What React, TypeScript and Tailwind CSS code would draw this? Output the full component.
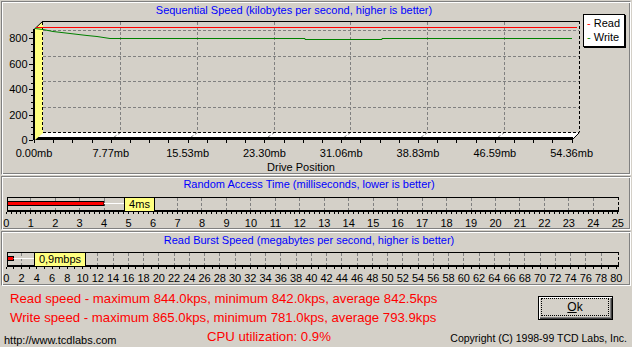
import React from "react";

// ─── Disk benchmark results window ────────────────────────────────────────────

const BG = "#d4d0c8";

const panel =
  "shrink-0 border border-t-[#808080] border-l-[#808080] border-b-white border-r-white shadow-[inset_1px_1px_0_#fff,inset_-1px_-1px_0_#808080]";

function SequentialChart() {
  const front = Array.from({ length: 8 }, (_, k) => 34 + k * 76.8);
  const labels = ["0.00mb", "7.77mb", "15.53mb", "23.30mb", "31.06mb", "38.83mb", "46.59mb", "54.36mb"];
  const backX = [120, 197, 274, 350, 427, 504];
  const backY = [30, 56, 81, 107];
  const xTicks = Array.from({ length: 29 }, (_, j) => Math.round(34 + j * 19.2) + 0.5);
  const yTicks = Array.from({ length: 18 }, (_, k) => ({ y: Math.round(140 - k * 6.375) + 0.5, major: k % 4 === 0 }));

  return (
    <svg width={626} height={157} viewBox="2 17 626 157" className="block">
      {/* back wall grid */}
      {backY.map((y) => (
        <line key={y} x1={43} x2={579} y1={y + 0.5} y2={y + 0.5} stroke="#808080" strokeDasharray="3 2" />
      ))}
      {backX.map((x) => (
        <line key={x} x1={x + 0.5} x2={x + 0.5} y1={22} y2={132} stroke="#808080" strokeDasharray="3 2" />
      ))}

      {/* floor */}
      <polygon points="43,132.5 579,132.5 572,139.5 36,139.5" fill="#fff" />
      {backX.map((x, i) => (
        <line key={x} x1={x + 0.5} y1={132.5} x2={front[i + 1]} y2={139.5} stroke="#808080" strokeDasharray="3 2" />
      ))}
      <line x1={43} x2={579} y1={132.5} y2={132.5} stroke="#000" strokeDasharray="3 2" />
      <line x1={579.5} x2={579.5} y1={21} y2={132} stroke="#000" strokeDasharray="3 2" />
      <line x1={579.5} y1={132.5} x2={572.5} y2={139.5} stroke="#000" />
      <rect x={35} y={137} width={538} height={3} fill="#000" />

      {/* left wall */}
      <polygon points="35,29 43,21 43,133 35,140" fill="#ffff80" />
      <line x1={42.5} x2={42.5} y1={22} y2={132} stroke="#000" strokeDasharray="3 2" />
      <rect x={33} y={29} width={2} height={111} fill="#000" />
      <line x1={34} y1={29.5} x2={43} y2={21} stroke="#000" />
      <line x1={43} x2={580} y1={21.5} y2={21.5} stroke="#000" />

      {/* series */}
      <line x1={36} x2={577} y1={27.5} y2={27.5} stroke="#ff0000" />
      <path
        d="M35 28.5 L43 29.5 L53 31.5 L70 33.5 L87 35.5 L97 36.5 L110 38.5 H305 V39.5 H382 V38.5 H572"
        fill="none"
        stroke="#008000"
      />

      {/* axes */}
      {yTicks.map((t) => (
        <line key={t.y} x1={t.major ? 29 : 31} x2={33} y1={t.y} y2={t.y} stroke="#000" />
      ))}
      {xTicks.map((x) => (
        <line key={x} x1={x} x2={x} y1={140} y2={143} stroke="#000" />
      ))}
      {["0", "200", "400", "600", "800"].map((l, k) => (
        <text key={l} x={27.5} y={144 - k * 25.5} fontSize={11} textAnchor="end" fill="#000">
          {l}
        </text>
      ))}
      {labels.map((l, k) => (
        <text key={l} x={front[k]} y={157} fontSize={11} textAnchor="middle" fill="#000">
          {l}
        </text>
      ))}
      <text x={301} y={171} fontSize={11} textAnchor="middle" fill="#000">
        Drive Position
      </text>
    </svg>
  );
}

type BarProps = {
  svgTop: number;
  top: number;
  labels: number[];
  span: number;
  ticksPer: number;
  fillRight: number;
  boxLeft: number;
  boxRight: number;
  value: string;
};

function ScaleBar({ svgTop, top, labels, span, ticksPer, fillRight, boxLeft, boxRight, value }: BarProps) {
  const n = labels.length - 1;
  const x = (i: number) => 6.3 + (i / n) * span;
  const ticks = Array.from({ length: n * ticksPer + 1 }, (_, j) => Math.floor(6.3 + (j / (n * ticksPer)) * span) + 0.5);

  return (
    <svg width={626} height={38} viewBox={`2 ${svgTop} 626 38`} className="block">
      {labels.slice(1, -1).map((_, i) => (
        <line
          key={i}
          x1={Math.floor(x(i + 1)) + 0.5}
          x2={Math.floor(x(i + 1)) + 0.5}
          y1={top + 1}
          y2={top + 13}
          stroke="#808080"
          strokeDasharray="3 2"
        />
      ))}
      <line x1={7} x2={619} y1={top + 0.5} y2={top + 0.5} stroke="#000" />
      <line x1={7.5} x2={7.5} y1={top} y2={top + 15} stroke="#000" />
      <line x1={618.5} x2={618.5} y1={top} y2={top + 13} stroke="#000" strokeDasharray="3 2" />
      <rect x={7} y={top + 13} width={612} height={2} fill="#000" />
      {ticks.map((t) => (
        <line key={t} x1={t} x2={t} y1={top + 15} y2={top + 17} stroke="#000" />
      ))}

      <rect x={7.5} y={top + 4.5} width={fillRight - 7.5} height={4} fill="#ff0000" stroke="#000" />
      <line x1={fillRight} x2={boxLeft} y1={top + 6.5} y2={top + 6.5} stroke="#fff" />
      <rect x={boxLeft + 0.5} y={top + 0.5} width={boxRight - boxLeft} height={14} fill="#ffff80" stroke="#000" />
      <text x={(boxLeft + boxRight) / 2 + 0.5} y={top + 11} fontSize={11} textAnchor="middle" fill="#000">
        {value}
      </text>

      {labels.map((l, i) => (
        <text key={l} x={x(i)} y={top + 30} fontSize={11} textAnchor="middle" fill="#000">
          {l}
        </text>
      ))}
    </svg>
  );
}

export default function App() {
  const accessLabels = Array.from({ length: 26 }, (_, i) => i);
  const burstLabels = Array.from({ length: 41 }, (_, i) => i * 2);

  return (
    <div
      className="w-[632px] h-[347px] overflow-hidden p-px flex flex-col gap-px font-['Liberation_Sans',Arial,sans-serif] text-black"
      style={{ background: BG }}
    >
      {/* Sequential speed */}
      <div className={`relative h-[174px] ${panel}`}>
        <div className="pt-px pr-[44px] text-center text-[11px] leading-[14px] text-[#0000ff]">
          Sequential Speed (kilobytes per second, higher is better)
        </div>
        <SequentialChart />
        <div className="absolute left-[581px] top-[12px] w-[42px] h-[33px] bg-white border border-black shadow-[1px_1px_0_#000] pt-px pl-[3px] text-[11px] leading-[14px]">
          <div>
            <span className="text-[#ff0000]">-</span> Read
          </div>
          <div>
            <span className="text-[#008000]">-</span> Write
          </div>
        </div>
      </div>

      {/* Random access */}
      <div className={`h-[54px] ${panel}`}>
        <div className="pr-[14px] text-center text-[11px] leading-[14px] text-[#0000ff]">
          Random Access Time (milliseconds, lower is better)
        </div>
        <ScaleBar
          svgTop={191}
          top={197}
          labels={accessLabels}
          span={611.5}
          ticksPer={5}
          fillRight={104}
          boxLeft={124}
          boxRight={154}
          value="4ms"
        />
      </div>

      {/* Burst speed */}
      <div className={`h-[55px] ${panel}`}>
        <div className="pt-px pr-[14px] text-center text-[11px] leading-[14px] text-[#0000ff]">
          Read Burst Speed (megabytes per second, higher is better)
        </div>
        <ScaleBar
          svgTop={247}
          top={252}
          labels={burstLabels}
          span={610}
          ticksPer={2}
          fillRight={13.5}
          boxLeft={34}
          boxRight={85}
          value="0,9mbps"
        />
      </div>

      {/* Summary */}
      <div className="flex flex-1">
        <div className="w-[440px] pt-[2px] text-[13.2px] leading-[19px] text-[#ff0000]">
          <div className="pl-[9px]">Read speed - maximum 844.0kps, minimum 842.0kps, average 842.5kps</div>
          <div className="pl-[9px]">Write speed - maximum 865.0kps, minimum 781.0kps, average 793.9kps</div>
          <div className="flex">
            <span className="w-[206px] shrink-0 pl-[3px] mt-[6px] text-[11px] leading-[14px] text-black">
              http://www.tcdlabs.com
            </span>
            <span>CPU utilization: 0.9%</span>
          </div>
        </div>
        <div className="flex-1">
          <div className="ml-[97px] mt-[9px] w-[75px] h-[24px] border border-black pt-px pb-[3px] pl-[2px] pr-[3px] shadow-[inset_1px_1px_0_#fff,inset_-1px_-1px_0_#404040,inset_-2px_-2px_0_#808080]">
            <div className="h-full border border-dotted border-black flex items-center justify-center text-[12px]">
              <span className="underline">O</span>k
            </div>
          </div>
          <div className="mt-[11px] pr-[4px] text-right text-[10.5px] leading-[14px]">
            Copyright (C) 1998-99 TCD Labs, Inc.
          </div>
        </div>
      </div>
    </div>
  );
}
